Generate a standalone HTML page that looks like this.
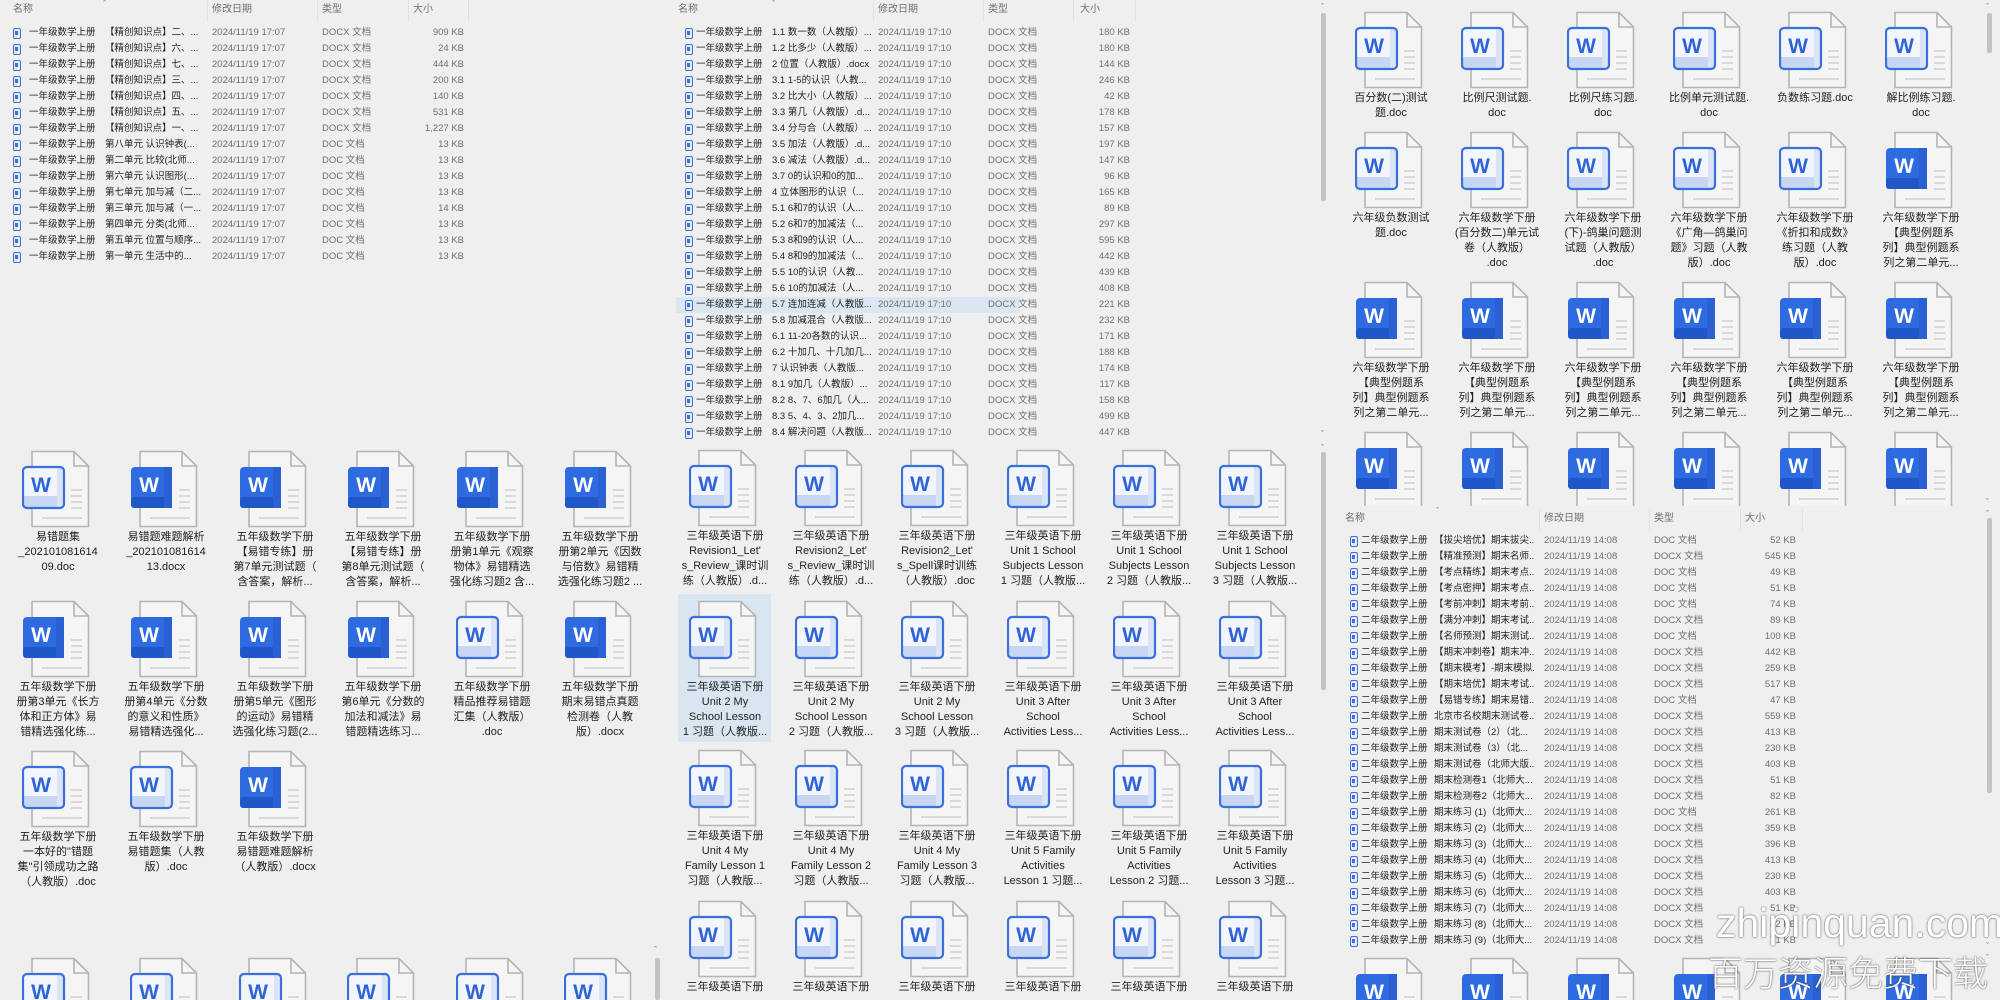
<!DOCTYPE html>
<html><head><meta charset="utf-8">
<style>
*{margin:0;padding:0;box-sizing:border-box}
html,body{width:2000px;height:1000px;overflow:hidden;background:#efefef;font-family:"Liberation Sans","Noto Sans CJK SC",sans-serif}
.p{position:absolute;overflow:hidden;background:#efefef}
.r{position:absolute;left:0;width:100%;height:16px;line-height:16px;font-size:9.5px;white-space:nowrap;color:#6f6f6f}
.r span{position:absolute;top:0}
.r .i{top:3px;width:8px;height:11px;border:1.4px solid #3d70d6;border-radius:2px;background:#e4ecfb}
.r .i:after{content:"";position:absolute;left:1px;top:2px;width:3px;height:4px;background:#3d70d6}
.r .n,.r .m{color:#222}
.r .m{width:100px;overflow:hidden}
.h{position:absolute;top:2px;height:16px;line-height:16px;font-size:10px;color:#6f6f6f}
.sep{position:absolute;top:0;width:1px;height:22px;background:#e2e2e2}
#A .i,#B .i{left:13px}#A .n{left:29px}#A .m{left:105px}#A .d{left:212px}#A .t{left:322px}#A .s{right:206px}
#B .n{left:24px}#B .m{left:100px}#B .d{left:206px}#B .t{left:316px}#B .s{right:197px}
#D .i{left:20px}#D .n{left:31px}#D .m{left:104px}#D .d{left:214px}#D .t{left:324px}#D .s{right:204px}
.c{position:absolute;width:100px;height:150px}
.c svg{position:absolute;left:14px;top:0;width:68px;height:78px}
.c .t{position:absolute;top:80px;left:0;width:100px;text-align:center;font-size:11px;line-height:15px;color:#222;white-space:nowrap}
.sb{position:absolute;width:5px;background:#c3c3c3;border-radius:2px}
.ar{position:absolute;font-size:9px;color:#777;line-height:9px}
.wm{position:absolute;color:#fff;text-shadow:0 0 2px rgba(60,60,60,.7),0 0 1px rgba(60,60,60,.8);white-space:nowrap}
</style></head><body>
<svg width="0" height="0" style="position:absolute">
<defs>
<symbol id="pg" viewBox="0 0 68 78">
<path d="M10 1.5H52L66.5 16V76.5H10Z" fill="#f5f5f5" stroke="#b4b4b4" stroke-width="1.6"/>
<path d="M52 1.5V16H66.5" fill="none" stroke="#b4b4b4" stroke-width="1.6"/>
<g stroke="#d9d9d9" stroke-width="2"><path d="M49 40H60M49 46H60M49 52H60M49 58H60M20 68H60"/></g>
</symbol>
<symbol id="wl" viewBox="0 0 68 78">
<use href="#pg"/>
<rect x="1" y="17" width="41" height="41" rx="4" fill="#f2f5fc"/>
<rect x="2" y="46" width="39" height="11" fill="#c7d7f3"/>
<rect x="35" y="18" width="6" height="39" fill="#dbe4f6"/>
<rect x="1" y="17" width="41" height="41" rx="4" fill="none" stroke="#3b6fd9" stroke-width="2.2"/>
<text x="19" y="42" text-anchor="middle" font-family="Liberation Sans,sans-serif" font-weight="bold" font-size="21" fill="#2f64d6">W</text>
</symbol>
<symbol id="wd" viewBox="0 0 68 78">
<use href="#pg"/>
<rect x="1" y="17" width="41" height="41" rx="4" fill="#2e6ae0"/>
<rect x="1" y="47" width="41" height="11" rx="3" fill="#1f57c9"/>
<rect x="34" y="17" width="8" height="41" fill="#2a60d2"/>
<text x="19" y="42" text-anchor="middle" font-family="Liberation Sans,sans-serif" font-weight="bold" font-size="21" fill="#fff">W</text>
</symbol>
</defs></svg>

<!-- Panel A -->
<div class="p" id="A" style="left:0;top:0;width:670px;height:440px">
<div class="ar" style="left:103px;top:0">ˆ</div>
<div class="h" style="left:13px">名称</div><div class="h" style="left:212px">修改日期</div><div class="h" style="left:322px">类型</div><div class="h" style="left:413px">大小</div>
<div class="sep" style="left:207px"></div><div class="sep" style="left:317px"></div><div class="sep" style="left:408px"></div><div class="sep" style="left:468px"></div>
<div class="r" style="top:25px"><span class="i"></span><span class="n">一年级数学上册</span><span class="m">【精创知识点】二、...</span><span class="d">2024/11/19 17:07</span><span class="t">DOCX 文档</span><span class="s">909 KB</span></div>
<div class="r" style="top:41px"><span class="i"></span><span class="n">一年级数学上册</span><span class="m">【精创知识点】六、...</span><span class="d">2024/11/19 17:07</span><span class="t">DOCX 文档</span><span class="s">24 KB</span></div>
<div class="r" style="top:57px"><span class="i"></span><span class="n">一年级数学上册</span><span class="m">【精创知识点】七、...</span><span class="d">2024/11/19 17:07</span><span class="t">DOCX 文档</span><span class="s">444 KB</span></div>
<div class="r" style="top:73px"><span class="i"></span><span class="n">一年级数学上册</span><span class="m">【精创知识点】三、...</span><span class="d">2024/11/19 17:07</span><span class="t">DOCX 文档</span><span class="s">200 KB</span></div>
<div class="r" style="top:89px"><span class="i"></span><span class="n">一年级数学上册</span><span class="m">【精创知识点】四、...</span><span class="d">2024/11/19 17:07</span><span class="t">DOCX 文档</span><span class="s">140 KB</span></div>
<div class="r" style="top:105px"><span class="i"></span><span class="n">一年级数学上册</span><span class="m">【精创知识点】五、...</span><span class="d">2024/11/19 17:07</span><span class="t">DOCX 文档</span><span class="s">531 KB</span></div>
<div class="r" style="top:121px"><span class="i"></span><span class="n">一年级数学上册</span><span class="m">【精创知识点】一、...</span><span class="d">2024/11/19 17:07</span><span class="t">DOCX 文档</span><span class="s">1,227 KB</span></div>
<div class="r" style="top:137px"><span class="i"></span><span class="n">一年级数学上册</span><span class="m">第八单元 认识钟表(...</span><span class="d">2024/11/19 17:07</span><span class="t">DOC 文档</span><span class="s">13 KB</span></div>
<div class="r" style="top:153px"><span class="i"></span><span class="n">一年级数学上册</span><span class="m">第二单元 比较(北师...</span><span class="d">2024/11/19 17:07</span><span class="t">DOC 文档</span><span class="s">13 KB</span></div>
<div class="r" style="top:169px"><span class="i"></span><span class="n">一年级数学上册</span><span class="m">第六单元 认识图形(...</span><span class="d">2024/11/19 17:07</span><span class="t">DOC 文档</span><span class="s">13 KB</span></div>
<div class="r" style="top:185px"><span class="i"></span><span class="n">一年级数学上册</span><span class="m">第七单元 加与减（二...</span><span class="d">2024/11/19 17:07</span><span class="t">DOC 文档</span><span class="s">13 KB</span></div>
<div class="r" style="top:201px"><span class="i"></span><span class="n">一年级数学上册</span><span class="m">第三单元 加与减（一...</span><span class="d">2024/11/19 17:07</span><span class="t">DOC 文档</span><span class="s">14 KB</span></div>
<div class="r" style="top:217px"><span class="i"></span><span class="n">一年级数学上册</span><span class="m">第四单元 分类(北师...</span><span class="d">2024/11/19 17:07</span><span class="t">DOC 文档</span><span class="s">13 KB</span></div>
<div class="r" style="top:233px"><span class="i"></span><span class="n">一年级数学上册</span><span class="m">第五单元 位置与顺序...</span><span class="d">2024/11/19 17:07</span><span class="t">DOC 文档</span><span class="s">13 KB</span></div>
<div class="r" style="top:249px"><span class="i"></span><span class="n">一年级数学上册</span><span class="m">第一单元 生活中的...</span><span class="d">2024/11/19 17:07</span><span class="t">DOC 文档</span><span class="s">13 KB</span></div>
</div>

<!-- Panel B -->
<div class="p" id="B" style="left:672px;top:0;width:655px;height:440px">
<div class="ar" style="left:100px;top:0">ˆ</div>
<div class="h" style="left:6px">名称</div><div class="h" style="left:206px">修改日期</div><div class="h" style="left:316px">类型</div><div class="h" style="left:408px">大小</div>
<div class="sep" style="left:201px"></div><div class="sep" style="left:311px"></div><div class="sep" style="left:401px"></div><div class="sep" style="left:463px"></div>
<div style="position:absolute;left:4px;top:297px;width:344px;height:16px;background:#dae6f2"></div>
<div class="r" style="top:25px"><span class="i"></span><span class="n">一年级数学上册</span><span class="m">1.1 数一数（人教版）...</span><span class="d">2024/11/19 17:10</span><span class="t">DOCX 文档</span><span class="s">180 KB</span></div>
<div class="r" style="top:41px"><span class="i"></span><span class="n">一年级数学上册</span><span class="m">1.2 比多少（人教版）...</span><span class="d">2024/11/19 17:10</span><span class="t">DOCX 文档</span><span class="s">180 KB</span></div>
<div class="r" style="top:57px"><span class="i"></span><span class="n">一年级数学上册</span><span class="m">2 位置（人教版）.docx</span><span class="d">2024/11/19 17:10</span><span class="t">DOCX 文档</span><span class="s">144 KB</span></div>
<div class="r" style="top:73px"><span class="i"></span><span class="n">一年级数学上册</span><span class="m">3.1 1-5的认识（人教...</span><span class="d">2024/11/19 17:10</span><span class="t">DOCX 文档</span><span class="s">246 KB</span></div>
<div class="r" style="top:89px"><span class="i"></span><span class="n">一年级数学上册</span><span class="m">3.2 比大小（人教版）...</span><span class="d">2024/11/19 17:10</span><span class="t">DOCX 文档</span><span class="s">42 KB</span></div>
<div class="r" style="top:105px"><span class="i"></span><span class="n">一年级数学上册</span><span class="m">3.3 第几（人教版）.d...</span><span class="d">2024/11/19 17:10</span><span class="t">DOCX 文档</span><span class="s">178 KB</span></div>
<div class="r" style="top:121px"><span class="i"></span><span class="n">一年级数学上册</span><span class="m">3.4 分与合（人教版）...</span><span class="d">2024/11/19 17:10</span><span class="t">DOCX 文档</span><span class="s">157 KB</span></div>
<div class="r" style="top:137px"><span class="i"></span><span class="n">一年级数学上册</span><span class="m">3.5 加法（人教版）.d...</span><span class="d">2024/11/19 17:10</span><span class="t">DOCX 文档</span><span class="s">197 KB</span></div>
<div class="r" style="top:153px"><span class="i"></span><span class="n">一年级数学上册</span><span class="m">3.6 减法（人教版）.d...</span><span class="d">2024/11/19 17:10</span><span class="t">DOCX 文档</span><span class="s">147 KB</span></div>
<div class="r" style="top:169px"><span class="i"></span><span class="n">一年级数学上册</span><span class="m">3.7 0的认识和0的加...</span><span class="d">2024/11/19 17:10</span><span class="t">DOCX 文档</span><span class="s">96 KB</span></div>
<div class="r" style="top:185px"><span class="i"></span><span class="n">一年级数学上册</span><span class="m">4 立体图形的认识（...</span><span class="d">2024/11/19 17:10</span><span class="t">DOCX 文档</span><span class="s">165 KB</span></div>
<div class="r" style="top:201px"><span class="i"></span><span class="n">一年级数学上册</span><span class="m">5.1 6和7的认识（人...</span><span class="d">2024/11/19 17:10</span><span class="t">DOCX 文档</span><span class="s">89 KB</span></div>
<div class="r" style="top:217px"><span class="i"></span><span class="n">一年级数学上册</span><span class="m">5.2 6和7的加减法（...</span><span class="d">2024/11/19 17:10</span><span class="t">DOCX 文档</span><span class="s">297 KB</span></div>
<div class="r" style="top:233px"><span class="i"></span><span class="n">一年级数学上册</span><span class="m">5.3 8和9的认识（人...</span><span class="d">2024/11/19 17:10</span><span class="t">DOCX 文档</span><span class="s">595 KB</span></div>
<div class="r" style="top:249px"><span class="i"></span><span class="n">一年级数学上册</span><span class="m">5.4 8和9的加减法（...</span><span class="d">2024/11/19 17:10</span><span class="t">DOCX 文档</span><span class="s">442 KB</span></div>
<div class="r" style="top:265px"><span class="i"></span><span class="n">一年级数学上册</span><span class="m">5.5 10的认识（人教...</span><span class="d">2024/11/19 17:10</span><span class="t">DOCX 文档</span><span class="s">439 KB</span></div>
<div class="r" style="top:281px"><span class="i"></span><span class="n">一年级数学上册</span><span class="m">5.6 10的加减法（人...</span><span class="d">2024/11/19 17:10</span><span class="t">DOCX 文档</span><span class="s">408 KB</span></div>
<div class="r" style="top:297px"><span class="i"></span><span class="n">一年级数学上册</span><span class="m">5.7 连加连减（人教版...</span><span class="d">2024/11/19 17:10</span><span class="t">DOCX 文档</span><span class="s">221 KB</span></div>
<div class="r" style="top:313px"><span class="i"></span><span class="n">一年级数学上册</span><span class="m">5.8 加减混合（人教版...</span><span class="d">2024/11/19 17:10</span><span class="t">DOCX 文档</span><span class="s">232 KB</span></div>
<div class="r" style="top:329px"><span class="i"></span><span class="n">一年级数学上册</span><span class="m">6.1 11-20各数的认识...</span><span class="d">2024/11/19 17:10</span><span class="t">DOCX 文档</span><span class="s">171 KB</span></div>
<div class="r" style="top:345px"><span class="i"></span><span class="n">一年级数学上册</span><span class="m">6.2 十加几、十几加几...</span><span class="d">2024/11/19 17:10</span><span class="t">DOCX 文档</span><span class="s">188 KB</span></div>
<div class="r" style="top:361px"><span class="i"></span><span class="n">一年级数学上册</span><span class="m">7 认识钟表（人教版...</span><span class="d">2024/11/19 17:10</span><span class="t">DOCX 文档</span><span class="s">174 KB</span></div>
<div class="r" style="top:377px"><span class="i"></span><span class="n">一年级数学上册</span><span class="m">8.1 9加几（人教版）...</span><span class="d">2024/11/19 17:10</span><span class="t">DOCX 文档</span><span class="s">117 KB</span></div>
<div class="r" style="top:393px"><span class="i"></span><span class="n">一年级数学上册</span><span class="m">8.2 8、7、6加几（人...</span><span class="d">2024/11/19 17:10</span><span class="t">DOCX 文档</span><span class="s">158 KB</span></div>
<div class="r" style="top:409px"><span class="i"></span><span class="n">一年级数学上册</span><span class="m">8.3 5、4、3、2加几...</span><span class="d">2024/11/19 17:10</span><span class="t">DOCX 文档</span><span class="s">499 KB</span></div>
<div class="r" style="top:425px"><span class="i"></span><span class="n">一年级数学上册</span><span class="m">8.4 解决问题（人教版...</span><span class="d">2024/11/19 17:10</span><span class="t">DOCX 文档</span><span class="s">447 KB</span></div>
</div>

<!-- Panel C -->
<div class="p" id="C" style="left:1330px;top:0;width:670px;height:506px">
<div class="c" style="left:11px;top:11px"><svg><use href="#wl"/></svg><div class="t">百分数(二)测试<br>题.doc</div></div>
<div class="c" style="left:117px;top:11px"><svg><use href="#wl"/></svg><div class="t">比例尺测试题.<br>doc</div></div>
<div class="c" style="left:223px;top:11px"><svg><use href="#wl"/></svg><div class="t">比例尺练习题.<br>doc</div></div>
<div class="c" style="left:329px;top:11px"><svg><use href="#wl"/></svg><div class="t">比例单元测试题.<br>doc</div></div>
<div class="c" style="left:435px;top:11px"><svg><use href="#wl"/></svg><div class="t">负数练习题.doc</div></div>
<div class="c" style="left:541px;top:11px"><svg><use href="#wl"/></svg><div class="t">解比例练习题.<br>doc</div></div>
<div class="c" style="left:11px;top:131px"><svg><use href="#wl"/></svg><div class="t">六年级负数测试<br>题.doc</div></div>
<div class="c" style="left:117px;top:131px"><svg><use href="#wl"/></svg><div class="t">六年级数学下册<br>(百分数二)单元试<br>卷（人教版）<br>.doc</div></div>
<div class="c" style="left:223px;top:131px"><svg><use href="#wl"/></svg><div class="t">六年级数学下册<br>(下)-鸽巢问题测<br>试题（人教版）<br>.doc</div></div>
<div class="c" style="left:329px;top:131px"><svg><use href="#wl"/></svg><div class="t">六年级数学下册<br>《广角—鸽巢问<br>题》习题（人教<br>版）.doc</div></div>
<div class="c" style="left:435px;top:131px"><svg><use href="#wl"/></svg><div class="t">六年级数学下册<br>《折扣和成数》<br>练习题（人教<br>版）.doc</div></div>
<div class="c" style="left:541px;top:131px"><svg><use href="#wd"/></svg><div class="t">六年级数学下册<br>【典型例题系<br>列】典型例题系<br>列之第二单元...</div></div>
<div class="c" style="left:11px;top:281px"><svg><use href="#wd"/></svg><div class="t">六年级数学下册<br>【典型例题系<br>列】典型例题系<br>列之第二单元...</div></div>
<div class="c" style="left:117px;top:281px"><svg><use href="#wd"/></svg><div class="t">六年级数学下册<br>【典型例题系<br>列】典型例题系<br>列之第二单元...</div></div>
<div class="c" style="left:223px;top:281px"><svg><use href="#wd"/></svg><div class="t">六年级数学下册<br>【典型例题系<br>列】典型例题系<br>列之第二单元...</div></div>
<div class="c" style="left:329px;top:281px"><svg><use href="#wd"/></svg><div class="t">六年级数学下册<br>【典型例题系<br>列】典型例题系<br>列之第二单元...</div></div>
<div class="c" style="left:435px;top:281px"><svg><use href="#wd"/></svg><div class="t">六年级数学下册<br>【典型例题系<br>列】典型例题系<br>列之第二单元...</div></div>
<div class="c" style="left:541px;top:281px"><svg><use href="#wd"/></svg><div class="t">六年级数学下册<br>【典型例题系<br>列】典型例题系<br>列之第二单元...</div></div>
<div class="c" style="left:11px;top:431px;height:75px"><svg><use href="#wd"/></svg></div>
<div class="c" style="left:117px;top:431px;height:75px"><svg><use href="#wd"/></svg></div>
<div class="c" style="left:223px;top:431px;height:75px"><svg><use href="#wd"/></svg></div>
<div class="c" style="left:329px;top:431px;height:75px"><svg><use href="#wd"/></svg></div>
<div class="c" style="left:435px;top:431px;height:75px"><svg><use href="#wd"/></svg></div>
<div class="c" style="left:541px;top:431px;height:75px"><svg><use href="#wd"/></svg></div>
</div>

<!-- Panel D -->
<div class="p" id="D" style="left:1330px;top:506px;width:670px;height:494px">
<div class="ar" style="left:106px;top:1px">ˆ</div>
<div class="h" style="left:15px;top:5px">名称</div><div class="h" style="left:214px;top:5px">修改日期</div><div class="h" style="left:324px;top:5px">类型</div><div class="h" style="left:415px;top:5px">大小</div>
<div class="sep" style="left:209px;top:3px"></div><div class="sep" style="left:319px;top:3px"></div><div class="sep" style="left:410px;top:3px"></div><div class="sep" style="left:472px;top:3px"></div>
<div class="r" style="top:27px"><span class="i"></span><span class="n">二年级数学上册</span><span class="m">【拔尖培优】期末拔尖...</span><span class="d">2024/11/19 14:08</span><span class="t">DOC 文档</span><span class="s">52 KB</span></div>
<div class="r" style="top:43px"><span class="i"></span><span class="n">二年级数学上册</span><span class="m">【精准预测】期末名师...</span><span class="d">2024/11/19 14:08</span><span class="t">DOCX 文档</span><span class="s">545 KB</span></div>
<div class="r" style="top:59px"><span class="i"></span><span class="n">二年级数学上册</span><span class="m">【考点精练】期末考点...</span><span class="d">2024/11/19 14:08</span><span class="t">DOC 文档</span><span class="s">49 KB</span></div>
<div class="r" style="top:75px"><span class="i"></span><span class="n">二年级数学上册</span><span class="m">【考点密押】期末考点...</span><span class="d">2024/11/19 14:08</span><span class="t">DOC 文档</span><span class="s">51 KB</span></div>
<div class="r" style="top:91px"><span class="i"></span><span class="n">二年级数学上册</span><span class="m">【考前冲刺】期末考前...</span><span class="d">2024/11/19 14:08</span><span class="t">DOC 文档</span><span class="s">74 KB</span></div>
<div class="r" style="top:107px"><span class="i"></span><span class="n">二年级数学上册</span><span class="m">【满分冲刺】期末考试...</span><span class="d">2024/11/19 14:08</span><span class="t">DOCX 文档</span><span class="s">89 KB</span></div>
<div class="r" style="top:123px"><span class="i"></span><span class="n">二年级数学上册</span><span class="m">【名师预测】期末测试...</span><span class="d">2024/11/19 14:08</span><span class="t">DOC 文档</span><span class="s">100 KB</span></div>
<div class="r" style="top:139px"><span class="i"></span><span class="n">二年级数学上册</span><span class="m">【期末冲刺卷】期末冲...</span><span class="d">2024/11/19 14:08</span><span class="t">DOCX 文档</span><span class="s">442 KB</span></div>
<div class="r" style="top:155px"><span class="i"></span><span class="n">二年级数学上册</span><span class="m">【期末模考】-期末模拟...</span><span class="d">2024/11/19 14:08</span><span class="t">DOCX 文档</span><span class="s">259 KB</span></div>
<div class="r" style="top:171px"><span class="i"></span><span class="n">二年级数学上册</span><span class="m">【期末培优】期末考试...</span><span class="d">2024/11/19 14:08</span><span class="t">DOCX 文档</span><span class="s">517 KB</span></div>
<div class="r" style="top:187px"><span class="i"></span><span class="n">二年级数学上册</span><span class="m">【易错专练】期末易错...</span><span class="d">2024/11/19 14:08</span><span class="t">DOC 文档</span><span class="s">47 KB</span></div>
<div class="r" style="top:203px"><span class="i"></span><span class="n">二年级数学上册</span><span class="m">北京市名校期末测试卷...</span><span class="d">2024/11/19 14:08</span><span class="t">DOCX 文档</span><span class="s">559 KB</span></div>
<div class="r" style="top:219px"><span class="i"></span><span class="n">二年级数学上册</span><span class="m">期末测试卷（2）（北...</span><span class="d">2024/11/19 14:08</span><span class="t">DOCX 文档</span><span class="s">413 KB</span></div>
<div class="r" style="top:235px"><span class="i"></span><span class="n">二年级数学上册</span><span class="m">期末测试卷（3）（北...</span><span class="d">2024/11/19 14:08</span><span class="t">DOCX 文档</span><span class="s">230 KB</span></div>
<div class="r" style="top:251px"><span class="i"></span><span class="n">二年级数学上册</span><span class="m">期末测试卷（北师大版...</span><span class="d">2024/11/19 14:08</span><span class="t">DOCX 文档</span><span class="s">403 KB</span></div>
<div class="r" style="top:267px"><span class="i"></span><span class="n">二年级数学上册</span><span class="m">期末检测卷1（北师大...</span><span class="d">2024/11/19 14:08</span><span class="t">DOCX 文档</span><span class="s">51 KB</span></div>
<div class="r" style="top:283px"><span class="i"></span><span class="n">二年级数学上册</span><span class="m">期末检测卷2（北师大...</span><span class="d">2024/11/19 14:08</span><span class="t">DOCX 文档</span><span class="s">82 KB</span></div>
<div class="r" style="top:299px"><span class="i"></span><span class="n">二年级数学上册</span><span class="m">期末练习 (1)（北师大...</span><span class="d">2024/11/19 14:08</span><span class="t">DOC 文档</span><span class="s">261 KB</span></div>
<div class="r" style="top:315px"><span class="i"></span><span class="n">二年级数学上册</span><span class="m">期末练习 (2)（北师大...</span><span class="d">2024/11/19 14:08</span><span class="t">DOCX 文档</span><span class="s">359 KB</span></div>
<div class="r" style="top:331px"><span class="i"></span><span class="n">二年级数学上册</span><span class="m">期末练习 (3)（北师大...</span><span class="d">2024/11/19 14:08</span><span class="t">DOCX 文档</span><span class="s">396 KB</span></div>
<div class="r" style="top:347px"><span class="i"></span><span class="n">二年级数学上册</span><span class="m">期末练习 (4)（北师大...</span><span class="d">2024/11/19 14:08</span><span class="t">DOCX 文档</span><span class="s">413 KB</span></div>
<div class="r" style="top:363px"><span class="i"></span><span class="n">二年级数学上册</span><span class="m">期末练习 (5)（北师大...</span><span class="d">2024/11/19 14:08</span><span class="t">DOCX 文档</span><span class="s">230 KB</span></div>
<div class="r" style="top:379px"><span class="i"></span><span class="n">二年级数学上册</span><span class="m">期末练习 (6)（北师大...</span><span class="d">2024/11/19 14:08</span><span class="t">DOCX 文档</span><span class="s">403 KB</span></div>
<div class="r" style="top:395px"><span class="i"></span><span class="n">二年级数学上册</span><span class="m">期末练习 (7)（北师大...</span><span class="d">2024/11/19 14:08</span><span class="t">DOCX 文档</span><span class="s">51 KB</span></div>
<div class="r" style="top:411px"><span class="i"></span><span class="n">二年级数学上册</span><span class="m">期末练习 (8)（北师大...</span><span class="d">2024/11/19 14:08</span><span class="t">DOCX 文档</span><span class="s">82 KB</span></div>
<div class="r" style="top:427px"><span class="i"></span><span class="n">二年级数学上册</span><span class="m">期末练习 (9)（北师大...</span><span class="d">2024/11/19 14:08</span><span class="t">DOCX 文档</span><span class="s">71 KB</span></div>
<div class="c" style="left:11px;top:451px;height:43px"><svg><use href="#wd"/></svg></div>
<div class="c" style="left:117px;top:451px;height:43px"><svg><use href="#wd"/></svg></div>
<div class="c" style="left:223px;top:451px;height:43px"><svg><use href="#wd"/></svg></div>
<div class="c" style="left:329px;top:451px;height:43px"><svg><use href="#wd"/></svg></div>
<div class="c" style="left:435px;top:451px;height:43px"><svg><use href="#wd"/></svg></div>
<div class="c" style="left:541px;top:451px;height:43px"><svg><use href="#wd"/></svg></div>
</div>

<!-- Panel E -->
<div class="p" id="E" style="left:0;top:440px;width:670px;height:560px">
<div class="c" style="left:8px;top:10px"><svg><use href="#wl"/></svg><div class="t">易错题集<br>_202101081614<br>09.doc</div></div>
<div class="c" style="left:116px;top:10px"><svg><use href="#wd"/></svg><div class="t">易错题难题解析<br>_202101081614<br>13.docx</div></div>
<div class="c" style="left:225px;top:10px"><svg><use href="#wd"/></svg><div class="t">五年级数学下册<br>【易错专练】册<br>第7单元测试题（<br>含答案，解析...</div></div>
<div class="c" style="left:333px;top:10px"><svg><use href="#wd"/></svg><div class="t">五年级数学下册<br>【易错专练】册<br>第8单元测试题（<br>含答案，解析...</div></div>
<div class="c" style="left:442px;top:10px"><svg><use href="#wd"/></svg><div class="t">五年级数学下册<br>册第1单元《观察<br>物体》易错精选<br>强化练习题2 含...</div></div>
<div class="c" style="left:550px;top:10px"><svg><use href="#wd"/></svg><div class="t">五年级数学下册<br>册第2单元《因数<br>与倍数》易错精<br>选强化练习题2 ...</div></div>
<div class="c" style="left:8px;top:160px"><svg><use href="#wd"/></svg><div class="t">五年级数学下册<br>册第3单元《长方<br>体和正方体》易<br>错精选强化练...</div></div>
<div class="c" style="left:116px;top:160px"><svg><use href="#wd"/></svg><div class="t">五年级数学下册<br>册第4单元《分数<br>的意义和性质》<br>易错精选强化...</div></div>
<div class="c" style="left:225px;top:160px"><svg><use href="#wd"/></svg><div class="t">五年级数学下册<br>册第5单元《图形<br>的运动》易错精<br>选强化练习题(2...</div></div>
<div class="c" style="left:333px;top:160px"><svg><use href="#wd"/></svg><div class="t">五年级数学下册<br>第6单元《分数的<br>加法和减法》易<br>错题精选练习...</div></div>
<div class="c" style="left:442px;top:160px"><svg><use href="#wl"/></svg><div class="t">五年级数学下册<br>精品推荐易错题<br>汇集（人教版）<br>.doc</div></div>
<div class="c" style="left:550px;top:160px"><svg><use href="#wd"/></svg><div class="t">五年级数学下册<br>期末易错点真题<br>检测卷（人教<br>版）.docx</div></div>
<div class="c" style="left:8px;top:310px"><svg><use href="#wl"/></svg><div class="t">五年级数学下册<br>一本好的"错题<br>集"引领成功之路<br>（人教版）.doc</div></div>
<div class="c" style="left:116px;top:310px"><svg><use href="#wl"/></svg><div class="t">五年级数学下册<br>易错题集（人教<br>版）.doc</div></div>
<div class="c" style="left:225px;top:310px"><svg><use href="#wd"/></svg><div class="t">五年级数学下册<br>易错题难题解析<br>（人教版）.docx</div></div>
<div class="c" style="left:8px;top:517px;height:43px"><svg><use href="#wl"/></svg></div>
<div class="c" style="left:116px;top:517px;height:43px"><svg><use href="#wl"/></svg></div>
<div class="c" style="left:225px;top:517px;height:43px"><svg><use href="#wl"/></svg></div>
<div class="c" style="left:333px;top:517px;height:43px"><svg><use href="#wl"/></svg></div>
<div class="c" style="left:442px;top:517px;height:43px"><svg><use href="#wl"/></svg></div>
<div class="c" style="left:550px;top:517px;height:43px"><svg><use href="#wl"/></svg></div>
<div class="ar" style="left:654px;top:506px">ˆ</div>
<div class="sb" style="left:655px;top:518px;height:42px"></div>
</div>

<!-- Panel F -->
<div class="p" id="F" style="left:672px;top:440px;width:655px;height:560px">
<div style="position:absolute;left:6px;top:154px;width:93px;height:148px;background:#d9e5f1"></div>
<div class="c" style="left:3px;top:9px"><svg><use href="#wl"/></svg><div class="t">三年级英语下册<br>Revision1_Let'<br>s_Review_课时训<br>练（人教版）.d...</div></div>
<div class="c" style="left:109px;top:9px"><svg><use href="#wl"/></svg><div class="t">三年级英语下册<br>Revision2_Let'<br>s_Review_课时训<br>练（人教版）.d...</div></div>
<div class="c" style="left:215px;top:9px"><svg><use href="#wl"/></svg><div class="t">三年级英语下册<br>Revision2_Let'<br>s_Spell课时训练<br>（人教版）.doc</div></div>
<div class="c" style="left:321px;top:9px"><svg><use href="#wl"/></svg><div class="t">三年级英语下册<br>Unit 1 School<br>Subjects Lesson<br>1 习题（人教版...</div></div>
<div class="c" style="left:427px;top:9px"><svg><use href="#wl"/></svg><div class="t">三年级英语下册<br>Unit 1 School<br>Subjects Lesson<br>2 习题（人教版...</div></div>
<div class="c" style="left:533px;top:9px"><svg><use href="#wl"/></svg><div class="t">三年级英语下册<br>Unit 1 School<br>Subjects Lesson<br>3 习题（人教版...</div></div>
<div class="c" style="left:3px;top:160px"><svg><use href="#wl"/></svg><div class="t">三年级英语下册<br>Unit 2 My<br>School Lesson<br>1 习题（人教版...</div></div>
<div class="c" style="left:109px;top:160px"><svg><use href="#wl"/></svg><div class="t">三年级英语下册<br>Unit 2 My<br>School Lesson<br>2 习题（人教版...</div></div>
<div class="c" style="left:215px;top:160px"><svg><use href="#wl"/></svg><div class="t">三年级英语下册<br>Unit 2 My<br>School Lesson<br>3 习题（人教版...</div></div>
<div class="c" style="left:321px;top:160px"><svg><use href="#wl"/></svg><div class="t">三年级英语下册<br>Unit 3 After<br>School<br>Activities Less...</div></div>
<div class="c" style="left:427px;top:160px"><svg><use href="#wl"/></svg><div class="t">三年级英语下册<br>Unit 3 After<br>School<br>Activities Less...</div></div>
<div class="c" style="left:533px;top:160px"><svg><use href="#wl"/></svg><div class="t">三年级英语下册<br>Unit 3 After<br>School<br>Activities Less...</div></div>
<div class="c" style="left:3px;top:309px"><svg><use href="#wl"/></svg><div class="t">三年级英语下册<br>Unit 4 My<br>Family Lesson 1<br>习题（人教版...</div></div>
<div class="c" style="left:109px;top:309px"><svg><use href="#wl"/></svg><div class="t">三年级英语下册<br>Unit 4 My<br>Family Lesson 2<br>习题（人教版...</div></div>
<div class="c" style="left:215px;top:309px"><svg><use href="#wl"/></svg><div class="t">三年级英语下册<br>Unit 4 My<br>Family Lesson 3<br>习题（人教版...</div></div>
<div class="c" style="left:321px;top:309px"><svg><use href="#wl"/></svg><div class="t">三年级英语下册<br>Unit 5 Family<br>Activities<br>Lesson 1 习题...</div></div>
<div class="c" style="left:427px;top:309px"><svg><use href="#wl"/></svg><div class="t">三年级英语下册<br>Unit 5 Family<br>Activities<br>Lesson 2 习题...</div></div>
<div class="c" style="left:533px;top:309px"><svg><use href="#wl"/></svg><div class="t">三年级英语下册<br>Unit 5 Family<br>Activities<br>Lesson 3 习题...</div></div>
<div class="c" style="left:3px;top:460px;height:100px"><svg><use href="#wl"/></svg><div class="t">三年级英语下册</div></div>
<div class="c" style="left:109px;top:460px;height:100px"><svg><use href="#wl"/></svg><div class="t">三年级英语下册</div></div>
<div class="c" style="left:215px;top:460px;height:100px"><svg><use href="#wl"/></svg><div class="t">三年级英语下册</div></div>
<div class="c" style="left:321px;top:460px;height:100px"><svg><use href="#wl"/></svg><div class="t">三年级英语下册</div></div>
<div class="c" style="left:427px;top:460px;height:100px"><svg><use href="#wl"/></svg><div class="t">三年级英语下册</div></div>
<div class="c" style="left:533px;top:460px;height:100px"><svg><use href="#wl"/></svg><div class="t">三年级英语下册</div></div>
</div>

<!-- scrollbars -->
<div class="ar" style="left:1321px;top:3px">ˆ</div>
<div class="sb" style="left:1321px;top:13px;height:188px"></div>
<div class="ar" style="left:1321px;top:430px">ˇ</div>
<div class="ar" style="left:1321px;top:444px">ˆ</div>
<div class="sb" style="left:1321px;top:452px;height:238px"></div>
<div class="ar" style="left:1986px;top:3px">ˆ</div>
<div class="sb" style="left:1987px;top:13px;height:40px"></div>
<div class="ar" style="left:1986px;top:498px">ˇ</div>
<div class="ar" style="left:1986px;top:510px">ˆ</div>
<div class="sb" style="left:1987px;top:518px;height:275px"></div>
<div class="ar" style="left:1986px;top:942px">ˇ</div>
<div class="ar" style="left:1986px;top:954px">ˆ</div>

<!-- watermark -->
<div class="wm" style="left:1716px;top:898px;font-size:41px;line-height:50px">zhipinquan.com</div>
<div class="wm" style="left:1708px;top:950px;font-size:35px;line-height:44px;font-family:'Noto Sans CJK SC','WenQuanYi Zen Hei',sans-serif;font-weight:300">百万资源免费下载</div>
</body></html>
